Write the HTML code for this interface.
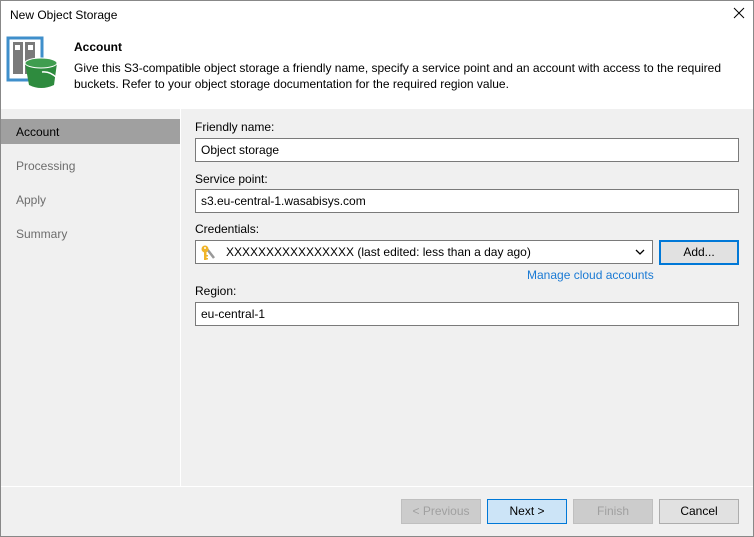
<!DOCTYPE html>
<html><head><meta charset="utf-8"><style>
*{margin:0;padding:0;box-sizing:border-box}
body{width:754px;height:537px;position:relative;overflow:hidden;font-family:"Liberation Sans",sans-serif;font-size:12px;color:#000;background:#f0f0f0}
.a{position:absolute}
.win{left:0;top:0;width:754px;height:537px;border:1px solid #888;}
.inp{position:absolute;background:#fff;border:1px solid #7a7a7a;height:24px;line-height:22px;padding-left:5px;font-size:12px}
.btn{position:absolute;top:499px;width:80px;height:25px;border:1px solid #adadad;background:#e1e1e1;text-align:center;line-height:23px;font-size:12px}
.dis{color:#a0a0a0;background:#cccccc;border-color:#bfbfbf}
.lbl{position:absolute;left:195px;font-size:12px}
.nav{position:absolute;left:16px;font-size:12px;color:#6d6d6d}
</style></head><body>
<div class="a" style="left:0;top:0;width:754px;height:109px;background:#fff"></div>
<div class="a" style="left:10px;top:8px;font-size:12px;color:#000">New Object Storage</div>
<svg class="a" style="left:732px;top:6px" width="14" height="14" viewBox="0 0 14 14"><path d="M2 2L12 12M12 2L2 12" stroke="#000" stroke-width="1"/></svg>
<svg class="a" style="left:6px;top:36px" width="54" height="54" viewBox="0 0 54 54">
<rect x="2" y="2" width="34" height="42" fill="#fff" stroke="#3f8fcb" stroke-width="3"/>
<rect x="7" y="6" width="10" height="32" fill="#7a7a7a"/><rect x="19" y="6" width="10" height="32" fill="#7a7a7a"/>
<rect x="9" y="9" width="5" height="5" fill="#fff"/><rect x="22" y="9" width="5" height="5" fill="#fff"/>
<path d="M19 27 L51 27 L48 49 Q35 55 23 49 Z" fill="#2e8b3e"/>
<ellipse cx="35" cy="27" rx="16" ry="5" fill="#3f9d4f" stroke="#fff" stroke-width="1"/>
<path d="M36 36 Q44 35 51 42" stroke="#fff" stroke-width="1.5" fill="none"/>
</svg>
<div class="a" style="left:74px;top:40px;font-weight:bold;font-size:12px">Account</div>
<div class="a" style="left:74px;top:60px;font-size:12px;line-height:16px;width:670px">Give this S3-compatible object storage a friendly name, specify a service point and an account with access to the required buckets. Refer to your object storage documentation for the required region value.</div>
<div class="a" style="left:1px;top:119px;width:179px;height:25px;background:#a0a0a0"></div>
<div class="nav" style="top:125px;color:#000">Account</div>
<div class="nav" style="top:159px">Processing</div>
<div class="nav" style="top:193px">Apply</div>
<div class="nav" style="top:227px">Summary</div>
<div class="a" style="left:180px;top:109px;width:1px;height:377px;background:#fff"></div>
<div class="a" style="left:1px;top:486px;width:752px;height:1px;background:#fff"></div>
<div class="lbl" style="top:120px">Friendly name:</div>
<div class="inp" style="left:195px;top:138px;width:544px">Object storage</div>
<div class="lbl" style="top:172px">Service point:</div>
<div class="inp" style="left:195px;top:189px;width:544px">s3.eu-central-1.wasabisys.com</div>
<div class="lbl" style="top:222px">Credentials:</div>
<div class="inp" style="left:195px;top:240px;width:458px;padding-left:30px">XXXXXXXXXXXXXXXX (last edited: less than a day ago)</div>
<svg class="a" style="left:200px;top:244px" width="18" height="17" viewBox="0 0 18 17"><path d="M7 5 L14 14" stroke="#999" stroke-width="2.5"/><circle cx="5" cy="5" r="3.5" fill="#f0b429"/><rect x="4" y="7" width="2.5" height="9" fill="#f0b429"/><rect x="6" y="11" width="2" height="1.5" fill="#f0b429"/><rect x="6" y="14" width="2" height="1.5" fill="#f0b429"/><circle cx="5" cy="4" r="1" fill="#fff"/></svg>
<svg class="a" style="left:635px;top:248px" width="10" height="8" viewBox="0 0 10 8"><path d="M1 2L5 6L9 2" stroke="#000" stroke-width="1.3" fill="none"/></svg>
<div class="btn" style="left:659px;top:240px;height:25px;border:2px solid #0078d7;line-height:21px">Add...</div>
<div class="a" style="left:527px;top:268px;font-size:12px;color:#1a7ad4">Manage cloud accounts</div>
<div class="lbl" style="top:284px">Region:</div>
<div class="inp" style="left:195px;top:302px;width:544px">eu-central-1</div>
<div class="btn dis" style="left:401px">&lt; Previous</div>
<div class="btn" style="left:487px;background:#cce4f7;border-color:#0078d7">Next &gt;</div>
<div class="btn dis" style="left:573px">Finish</div>
<div class="btn" style="left:659px">Cancel</div>
<div class="a win"></div>
</body></html>
